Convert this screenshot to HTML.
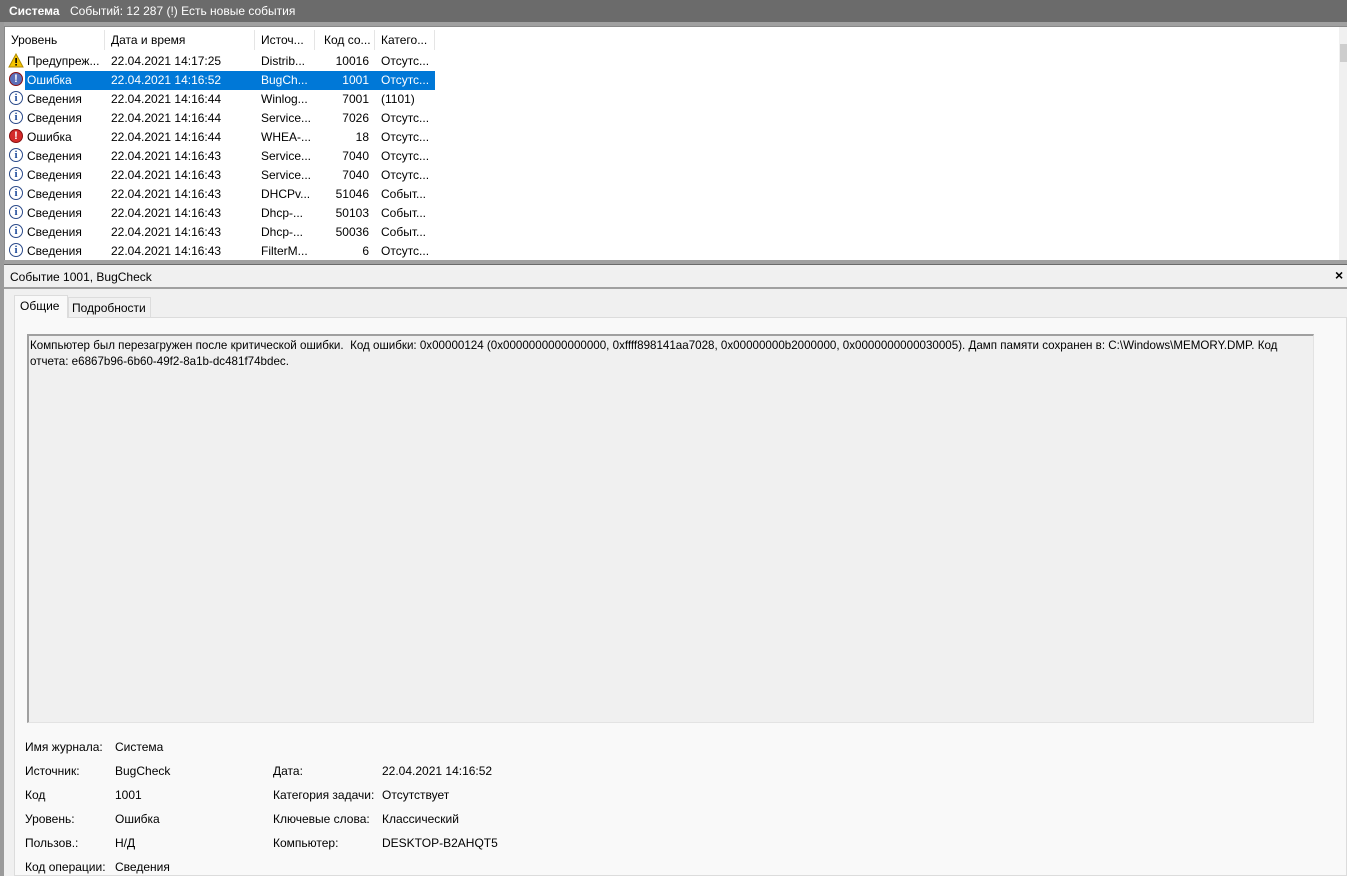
<!DOCTYPE html><html><head><meta charset="utf-8"><style>
*{margin:0;padding:0;box-sizing:border-box}
body{width:1347px;height:876px;overflow:hidden;background:#f0f0f0;font-family:"Liberation Sans",sans-serif;font-size:12px;color:#000;position:relative}
.a{position:absolute;white-space:nowrap}
.ic{position:absolute;width:14px;height:14px;border-radius:50%;left:9px}
.inf{border:1px solid #2b4a8a;background:#fff;color:#1e4a9a;font:bold 11px "Liberation Serif",serif;text-align:center;line-height:12px}
</style></head><body>
<div class="a" style="left:0;top:0;width:1347px;height:22px;background:#6b6b6b"></div>
<div class="a" style="left:9px;top:4px;color:#fff;font-weight:bold">Система</div>
<div class="a" style="left:70px;top:4px;color:#fff">Событий: 12 287 (!) Есть новые события</div>
<div class="a" style="left:0;top:22px;width:1347px;height:4px;background:#a0a0a0"></div>
<div class="a" style="left:0;top:22px;width:4px;height:854px;background:#9a9a9a"></div>
<div class="a" style="left:4px;top:26px;width:1343px;height:234px;background:#fff;border-top:1px solid #888;border-left:1px solid #888"></div>
<div class="a" style="left:1339px;top:27px;width:8px;height:233px;background:#f0f0f0"></div>
<div class="a" style="left:1340px;top:44px;width:7px;height:18px;background:#cdcdcd"></div>
<div class="a" style="left:104px;top:30px;width:1px;height:20px;background:#e5e5e5"></div>
<div class="a" style="left:254px;top:30px;width:1px;height:20px;background:#e5e5e5"></div>
<div class="a" style="left:314px;top:30px;width:1px;height:20px;background:#e5e5e5"></div>
<div class="a" style="left:374px;top:30px;width:1px;height:20px;background:#e5e5e5"></div>
<div class="a" style="left:434px;top:30px;width:1px;height:20px;background:#e5e5e5"></div>
<div class="a" style="left:11px;top:33px">Уровень</div>
<div class="a" style="left:111px;top:33px">Дата и время</div>
<div class="a" style="left:261px;top:33px">Источ...</div>
<div class="a" style="left:324px;top:33px">Код со...</div>
<div class="a" style="left:381px;top:33px">Катего...</div>
<div class="a" style="left:25px;top:71px;width:410px;height:19px;background:#0078d7"></div>
<div id="rows"></div>
<script>
var r=[["w","Предупреж...","22.04.2021 14:17:25","Distrib...","10016","Отсутс..."],
["e","Ошибка","22.04.2021 14:16:52","BugCh...","1001","Отсутс..."],
["i","Сведения","22.04.2021 14:16:44","Winlog...","7001","(1101)"],
["i","Сведения","22.04.2021 14:16:44","Service...","7026","Отсутс..."],
["e","Ошибка","22.04.2021 14:16:44","WHEA-...","18","Отсутс..."],
["i","Сведения","22.04.2021 14:16:43","Service...","7040","Отсутс..."],
["i","Сведения","22.04.2021 14:16:43","Service...","7040","Отсутс..."],
["i","Сведения","22.04.2021 14:16:43","DHCPv...","51046","Событ..."],
["i","Сведения","22.04.2021 14:16:43","Dhcp-...","50103","Событ..."],
["i","Сведения","22.04.2021 14:16:43","Dhcp-...","50036","Событ..."],
["i","Сведения","22.04.2021 14:16:43","FilterM...","6","Отсутс..."]];
var h="";r.forEach(function(x,i){var t=54+i*19,c=i==1?"color:#fff;":"";
var ic=x[0]=="w"?'<svg class="a" style="left:8px;top:'+(t-1)+'px" width="16" height="15"><path d="M8 1L15 14H1Z" fill="#f5c400" stroke="#b08a00"/><rect x="7.3" y="5" width="1.6" height="5" fill="#000"/><rect x="7.3" y="11" width="1.6" height="1.6" fill="#000"/></svg>':
x[0]=="e"?'<div class="ic" style="top:'+(t-1)+'px;background:'+(i==1?'#5b6fb8':'#d42a2a')+';border:1px solid #8a1010;color:#fff;font:bold 11px sans-serif;text-align:center;line-height:12px">!</div>':
'<div class="ic inf" style="top:'+(t-1)+'px">i</div>';
h+=ic+'<div class="a" style="'+c+'left:27px;top:'+t+'px">'+x[1]+'</div><div class="a" style="'+c+'left:111px;top:'+t+'px">'+x[2]+'</div><div class="a" style="'+c+'left:261px;top:'+t+'px">'+x[3]+'</div><div class="a" style="'+c+'right:978px;top:'+t+'px">'+x[4]+'</div><div class="a" style="'+c+'left:381px;top:'+t+'px">'+x[5]+'</div>';});
document.getElementById("rows").innerHTML=h;
</script>
<div class="a" style="left:4px;top:260px;width:1343px;height:5px;background:#a0a0a0;border-bottom:1px solid #6a6a6a"></div>
<div class="a" style="left:4px;top:265px;width:1343px;height:24px;background:#f0f0f0;border-bottom:2px solid #a0a0a0"></div>
<div class="a" style="left:10px;top:270px">Событие 1001, BugCheck</div>
<div class="a" style="left:1335px;top:267px;font-weight:bold;font-size:14px">×</div>
<div class="a" style="left:14px;top:317px;width:1333px;height:559px;background:#f9f9f9;border:1px solid #dcdcdc"></div>
<div class="a" style="left:14px;top:295px;width:54px;height:23px;background:#f9f9f9;border:1px solid #dcdcdc;border-bottom:none"></div>
<div class="a" style="left:20px;top:299px">Общие</div>
<div class="a" style="left:68px;top:297px;width:83px;height:20px;background:#f0f0f0;border:1px solid #dcdcdc;border-bottom:none"></div>
<div class="a" style="left:72px;top:301px">Подробности</div>
<div class="a" style="left:27px;top:334px;width:1287px;height:389px;background:#f0f0f0;border-top:2px solid #a0a0a0;border-left:2px solid #a0a0a0;border-right:1px solid #e3e3e3;border-bottom:1px solid #e3e3e3"></div>
<div class="a" style="left:30px;top:338px;line-height:16px;font-size:11.6px">Компьютер был перезагружен после критической ошибки.&nbsp; Код ошибки: 0x00000124 (0x0000000000000000, 0xffff898141aa7028, 0x00000000b2000000, 0x0000000000030005). Дамп памяти сохранен в: C:\Windows\MEMORY.DMP. Код<br>отчета: e6867b96-6b60-49f2-8a1b-dc481f74bdec.</div>
<div class="a" style="left:25px;top:740px">Имя журнала:</div><div class="a" style="left:115px;top:740px">Система</div>
<div class="a" style="left:25px;top:764px">Источник:</div><div class="a" style="left:115px;top:764px">BugCheck</div>
<div class="a" style="left:273px;top:764px">Дата:</div><div class="a" style="left:382px;top:764px">22.04.2021 14:16:52</div>
<div class="a" style="left:25px;top:788px">Код</div><div class="a" style="left:115px;top:788px">1001</div>
<div class="a" style="left:273px;top:788px">Категория задачи:</div><div class="a" style="left:382px;top:788px">Отсутствует</div>
<div class="a" style="left:25px;top:812px">Уровень:</div><div class="a" style="left:115px;top:812px">Ошибка</div>
<div class="a" style="left:273px;top:812px">Ключевые слова:</div><div class="a" style="left:382px;top:812px">Классический</div>
<div class="a" style="left:25px;top:836px">Пользов.:</div><div class="a" style="left:115px;top:836px">Н/Д</div>
<div class="a" style="left:273px;top:836px">Компьютер:</div><div class="a" style="left:382px;top:836px">DESKTOP-B2AHQT5</div>
<div class="a" style="left:25px;top:860px">Код операции:</div><div class="a" style="left:115px;top:860px">Сведения</div>
</body></html>
